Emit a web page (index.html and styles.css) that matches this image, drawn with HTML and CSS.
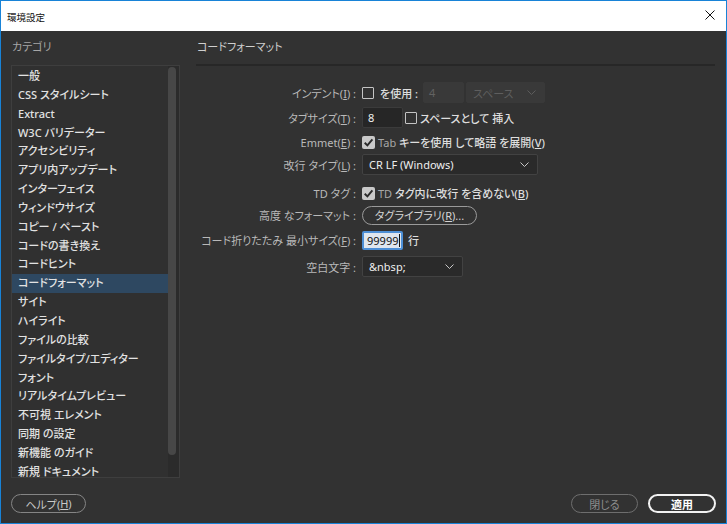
FILE: index.html
```html
<!DOCTYPE html>
<html lang="ja">
<head>
<meta charset="utf-8">
<title>環境設定</title>
<link rel="stylesheet" href="styles.css">
</head>
<body>
<div class="window">
  <div class="titlebar">
    <span class="title">環境設定</span>
    <svg class="close" width="10" height="10" viewBox="0 0 10 10"><path d="M0.5 0.5 L9.5 9.5 M9.5 0.5 L0.5 9.5" stroke="#111" stroke-width="1" fill="none"/></svg>
  </div>
  <div class="body">
    <div class="main">
      <div class="sidebar">
        <div class="side-head">カテゴリ</div>
        <div class="listbox">
          <ul class="list">
            <li>一般</li>
            <li>CSS スタイルシート</li>
            <li>Extract</li>
            <li>W3C バリデーター</li>
            <li>アクセシビリティ</li>
            <li>アプリ内アップデート</li>
            <li>インターフェイス</li>
            <li>ウィンドウサイズ</li>
            <li>コピー / ペースト</li>
            <li>コードの書き換え</li>
            <li>コードヒント</li>
            <li class="selected">コードフォーマット</li>
            <li>サイト</li>
            <li>ハイライト</li>
            <li>ファイルの比較</li>
            <li>ファイルタイプ/エディター</li>
            <li>フォント</li>
            <li>リアルタイムプレビュー</li>
            <li>不可視 エレメント</li>
            <li>同期 の設定</li>
            <li>新機能 のガイド</li>
            <li>新規 ドキュメント</li>
          </ul>
          <div class="scrollbar"><div class="thumb"></div></div>
        </div>
      </div>
      <div class="panel">
        <div class="panel-head">コードフォーマット</div>
        <div class="form">
          <div class="row r1">
            <div class="label">インデント(<u>I</u>) :</div>
            <div class="ctrl">
              <span class="cb"></span>
              <span class="val gap6">を使用 :</span>
              <span class="input disabled w41 ml5">4</span>
              <span class="select disabled w79 ml2">スペース<svg class="chev" width="9" height="5" viewBox="0 0 9 5"><path d="M0.5 0.5 L4.5 4.5 L8.5 0.5" stroke="#5c5c5c" fill="none"/></svg></span>
            </div>
          </div>
          <div class="row r2">
            <div class="label">タブサイズ(<u>T</u>) :</div>
            <div class="ctrl">
              <span class="input w41">8</span>
              <span class="cb ml2"></span>
              <span class="val gap3">スペースとして 挿入</span>
            </div>
          </div>
          <div class="row r3">
            <div class="label">Emmet(<u>E</u>) :</div>
            <div class="ctrl">
              <span class="cb checked"><svg width="12" height="12" viewBox="0 0 12 12"><path d="M2.5 6.2 L5 8.7 L9.6 3.2" stroke="#2a2a2a" stroke-width="1.8" fill="none"/></svg></span>
              <span class="val gap3"><span class="dim">Tab</span> キーを使用 して略語 を展開(<u>V</u>)</span>
            </div>
          </div>
          <div class="row r4">
            <div class="label">改行 タイプ(<u>L</u>) :</div>
            <div class="ctrl">
              <span class="select w176">CR LF (Windows)<svg class="chev" width="9" height="5" viewBox="0 0 9 5"><path d="M0.5 0.5 L4.5 4.5 L8.5 0.5" stroke="#c8c8c8" fill="none"/></svg></span>
            </div>
          </div>
          <div class="row r5">
            <div class="label">TD タグ :</div>
            <div class="ctrl">
              <span class="cb checked"><svg width="12" height="12" viewBox="0 0 12 12"><path d="M2.5 6.2 L5 8.7 L9.6 3.2" stroke="#2a2a2a" stroke-width="1.8" fill="none"/></svg></span>
              <span class="val gap3"><span class="dim">TD</span> タグ内に改行 を含めない(<u>B</u>)</span>
            </div>
          </div>
          <div class="row r6">
            <div class="label">高度 なフォーマット :</div>
            <div class="ctrl">
              <span class="pill">タグライブラリ(<u>R</u>)...</span>
            </div>
          </div>
          <div class="row r7">
            <div class="label">コード折りたたみ 最小サイズ(<u>F</u>) :</div>
            <div class="ctrl">
              <span class="input focus w41">99999<span class="caret"></span></span>
              <span class="val gap5">行</span>
            </div>
          </div>
          <div class="row r8">
            <div class="label">空白文字 :</div>
            <div class="ctrl">
              <span class="select w101">&amp;nbsp;<svg class="chev" width="9" height="5" viewBox="0 0 9 5"><path d="M0.5 0.5 L4.5 4.5 L8.5 0.5" stroke="#c8c8c8" fill="none"/></svg></span>
            </div>
          </div>
        </div>
      </div>
    </div>
    <div class="footer">
      <span class="btn help">ヘルプ(<u>H</u>)</span>
      <div class="footer-right">
        <span class="btn close-btn">閉じる</span>
        <span class="btn apply">適用</span>
      </div>
    </div>
  </div>
</div>
</body>
</html>
```

FILE: styles.css
```css
* { box-sizing: border-box; }
html, body {
  margin: 0;
  padding: 0;
  background: #323232;
}
body {
  font-family: "Noto Sans", "Noto Sans CJK JP", sans-serif;
  font-size: 11px;
  font-feature-settings: "palt";
  color: #d8d8d8;
}
.window {
  width: 727px;
  height: 524px;
  border: 1px solid #1883d7;
  display: flex;
  flex-direction: column;
  overflow: hidden;
}
.titlebar {
  height: 30px;
  background: #ffffff;
  display: flex;
  align-items: center;
  justify-content: space-between;
  padding: 0 11px 0 6px;
  flex: none;
}
.title {
  font-family: "Noto Sans CJK JP", sans-serif;
  font-size: 9.5px;
  color: #111;
  padding-top: 1px;
}
.close { display: block; margin-top: -2px; }
.body {
  flex: 1;
  background: #323232;
  display: flex;
  flex-direction: column;
}
.main {
  display: flex;
  height: 447px;
  padding-left: 10px;
  flex: none;
}
.sidebar {
  width: 169px;
  display: flex;
  flex-direction: column;
}
.side-head {
  height: 34px;
  line-height: 32px;
  padding-left: 1px;
  color: #a6a6a6;
}
.listbox {
  height: 413px;
  border: 1px solid #3e3e3e;
  background: #303030;
  display: flex;
  overflow: hidden;
}
.list {
  list-style: none;
  margin: 0;
  padding: 1px 0 0 0;
  flex: 1;
  overflow: hidden;
}
.list li {
  height: 18.85px;
  line-height: 18.85px;
  padding-left: 6px;
  color: #e2e2e2;
  font-weight: 500;
  white-space: nowrap;
}
.list li.selected {
  background: #2e4861;
}
.scrollbar {
  width: 11px;
  background: #2b2b2b;
  padding: 1px 2px 0 0;
}
.thumb {
  height: 388px;
  width: 8px;
  background: #474747;
  border-radius: 4px;
}
.panel {
  flex: 1;
  margin-left: 16px;
  margin-right: 11px;
  display: flex;
  flex-direction: column;
}
.panel-head {
  height: 35px;
  line-height: 32px;
  border-bottom: 2px solid #272727;
  color: #cfcfcf;
  padding-left: 1px;
}
.form {
  display: flex;
  flex-direction: column;
}
.row {
  display: flex;
  align-items: center;
  height: 21px;
}
.r1 { margin-top: 16px; }
.r2 { margin-top: 4px; }
.r3 { margin-top: 4px; height: 20px; }
.r4 { margin-top: 2px; }
.r5 { margin-top: 8px; height: 20px; }
.r6 { margin-top: 2px; height: 20px; }
.r7 { margin-top: 5px; height: 20px; }
.r8 { margin-top: 6px; }
.label {
  width: 160px;
  text-align: right;
  color: #b9b9b9;
  white-space: nowrap;
  flex: none;
}
.ctrl {
  display: flex;
  align-items: center;
  margin-left: 6px;
  height: 100%;
}
.val {
  color: #dedede;
  font-weight: 500;
  white-space: nowrap;
}
.dim { color: #a8a8a8; font-weight: 400; }
.gap3 { margin-left: 3px; }
.gap5 { margin-left: 5px; }
.gap6 { margin-left: 6px; }
.ml2 { margin-left: 2px; }
.ml5 { margin-left: 5px; }
.cb {
  width: 12px;
  height: 12px;
  border: 1px solid #c4c4c4;
  border-radius: 1px;
  display: inline-block;
  flex: none;
}
.cb.checked {
  border: none;
  background: #c9c9c9;
  border-radius: 2px;
  width: 13px;
  height: 13px;
}
.cb svg { display: block; width: 13px; height: 13px; }
.input {
  height: 21px;
  display: flex;
  align-items: center;
  padding-left: 5px;
  background: #262626;
  border: 1px solid #3b3b3b;
  border-radius: 2px;
  color: #f0f0f0;
  flex: none;
}
.input.disabled {
  background: #393939;
  border-color: #393939;
  color: #626262;
}
.input.focus {
  height: 19px;
  background: #dfe6ee;
  border: 2px solid #4d8fd6;
  color: #111;
  padding-left: 3px;
}
.caret {
  width: 1px;
  height: 13px;
  background: #111;
  margin-left: 1px;
}
.w41 { width: 41px; }
.w79 { width: 79px; }
.w101 { width: 101px; }
.w176 { width: 176px; }
.select {
  height: 21px;
  display: flex;
  align-items: center;
  justify-content: space-between;
  padding: 0 8px 0 6px;
  background: #2a2a2a;
  border: 1px solid #424242;
  border-radius: 2px;
  color: #eeeeee;
  flex: none;
}
.select.disabled {
  background: #393939;
  border-color: #393939;
  color: #5e5e5e;
}
.chev { display: block; }
.pill {
  width: 115px;
  height: 19px;
  border: 1px solid #9a9a9a;
  border-radius: 10px;
  display: flex;
  align-items: center;
  justify-content: center;
  color: #d4d4d4;
  flex: none;
}
.footer {
  flex: 1;
  display: flex;
  justify-content: space-between;
  padding: 16px 10px 0 10px;
}
.footer-right {
  display: flex;
  gap: 10px;
}
.btn {
  height: 19px;
  border-radius: 10px;
  display: flex;
  align-items: center;
  justify-content: center;
}
.help {
  width: 75px;
  border: 1px solid #858585;
  color: #c8c8c8;
}
.close-btn {
  width: 67px;
  border: 1px solid #6e6e6e;
  color: #8e8e8e;
}
.apply {
  width: 68px;
  border: 2px solid #f2f2f2;
  color: #ffffff;
  font-weight: 700;
}
u { text-decoration: underline; text-underline-offset: 1px; }
```
